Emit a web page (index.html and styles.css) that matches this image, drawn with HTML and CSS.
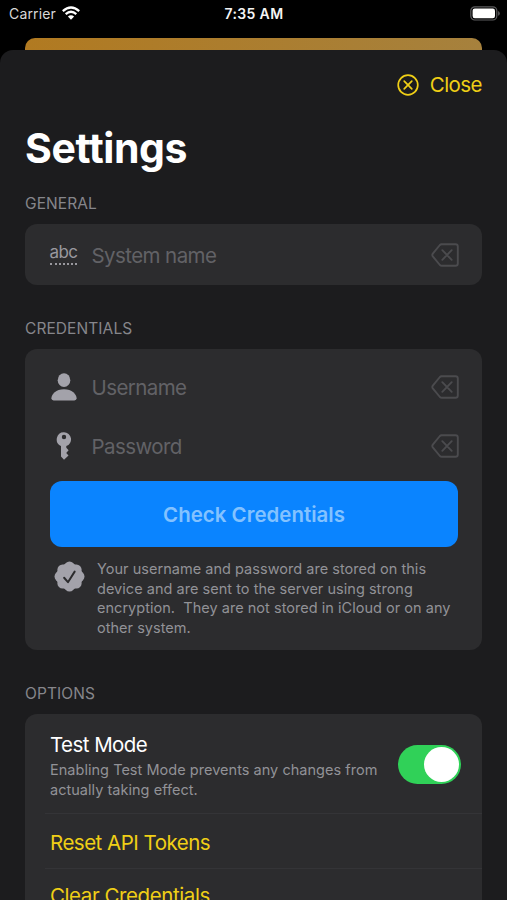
FILE: index.html
```html
<!DOCTYPE html>
<html lang="en">
<head>
<meta charset="utf-8">
<title>Settings</title>
<link rel="stylesheet" href="styles.css">
</head>
<body>
<svg class="defs" width="0" height="0" aria-hidden="true">
  <symbol id="clear" viewBox="0 0 28 24">
    <path d="M10.2 1.2H24.5Q26.8 1.2 26.8 3.5V20.5Q26.8 22.8 24.5 22.8H10.7Q9.7 22.8 8.9 22L1.8 13.4Q.8 12 1.8 10.6L8.9 2Q9.6 1.2 10.7 1.2ZM11.3 7.2L20.7 16.8M20.7 7.2L11.3 16.8" fill="none" stroke="currentColor" stroke-width="1.9" stroke-linecap="round" stroke-linejoin="round"/>
  </symbol>
</svg>
<div class="screen">
  <header class="status">
    <div class="status-left">
      <span class="carrier">Carrier</span>
      <svg class="wifi" viewBox="0 0 18 14"><g fill="none" stroke="#fff" stroke-width="2.3"><path d="M.8 5.1Q9-2.1 17.2 5.1"/><path d="M3.7 8.2Q9 3.4 14.3 8.2"/></g><path d="M5.9 10.4Q9 7.9 12.1 10.4L9 13.7Z" fill="#fff"/></svg>
    </div>
    <span class="time">7:35 AM</span>
    <div class="status-right">
      <svg class="battery" viewBox="0 0 30 15"><rect x=".8" y=".8" width="26" height="13.2" rx="4" fill="none" stroke="#5c5c5e" stroke-width="1.2"/><rect x="2.6" y="2.6" width="22.4" height="9.6" rx="2.2" fill="#fff"/><path d="M28.1 5.1Q29.8 5.7 29.8 7.4T28.1 9.7Z" fill="#5c5c5e"/></svg>
    </div>
  </header>
  <div class="backdrop"></div>
  <main class="sheet">
    <div class="toolbar">
      <button class="close">
        <svg viewBox="0 0 22 22" width="22" height="22"><path d="M7.2 7.2L14.8 14.8M14.8 7.2L7.2 14.8" stroke="currentColor" stroke-width="1.7" stroke-linecap="round"/><circle cx="11" cy="11" r="9.8" fill="none" stroke="currentColor" stroke-width="1.7"/></svg>
        <span class="close-text">Close</span>
      </button>
    </div>
    <h1>Settings</h1>

    <h2 class="h-general">General</h2>
    <section class="card general">
      <div class="field">
        <span class="icon"><span class="abc">abc</span></span>
        <span class="placeholder system">System name</span>
        <svg class="clear"><use href="#clear"/></svg>
      </div>
    </section>

    <h2 class="h-credentials">Credentials</h2>
    <section class="card credentials">
      <div class="field">
        <span class="icon"><svg width="26" height="28" viewBox="0 0 26 28"><ellipse cx="13" cy="7.2" rx="6.3" ry="6.9" fill="currentColor"/><path d="M2.6 27.4Q.4 27.4.4 25.3C.4 21.5 5 16.3 13 16.3S25.6 21.5 25.6 25.3Q25.6 27.4 23.4 27.4Z" fill="currentColor"/></svg></span>
        <span class="placeholder username">Username</span>
        <svg class="clear"><use href="#clear"/></svg>
      </div>
      <div class="field">
        <span class="icon"><svg width="16" height="28" viewBox="0 0 16 28"><path fill="currentColor" fill-rule="evenodd" d="M8 .3A7.1 7.1 0 0 0 5 13.9V24.6L8 27.8L12.5 23.4L10.2 20.9L12.6 18.3L10.3 15.8V14.1A7.1 7.1 0 0 0 8 .3ZM8 2.8A2.2 2.2 0 1 1 8 7.2A2.2 2.2 0 1 1 8 2.8Z"/></svg></span>
        <span class="placeholder password">Password</span>
        <svg class="clear"><use href="#clear"/></svg>
      </div>
      <button class="check"><span>Check Credentials</span></button>
      <div class="note">
        <svg class="seal" viewBox="0 0 30 30"><g fill="#a3a2aa"><rect x="3.3" y="3.3" width="23.4" height="23.4" rx="5"/><rect x="3.3" y="3.3" width="23.4" height="23.4" rx="5" transform="rotate(45 15 15)"/></g><path d="M9.8 16.2L13.5 20.5L20 10.3" fill="none" stroke="#2c2c2e" stroke-width="1.9" stroke-linecap="round" stroke-linejoin="round"/></svg>
        <p class="small">Your username and password are stored on this<br>device and are sent to the server using strong<br>encryption.&nbsp; They are not stored in iCloud or on any<br>other system.</p>
      </div>
    </section>

    <h2 class="h-options">Options</h2>
    <section class="card options">
      <div class="test-row">
        <div>
          <div class="row-title">Test Mode</div>
          <p class="small">Enabling Test Mode prevents any changes from<br>actually taking effect.</p>
        </div>
        <span class="toggle"><span class="knob"></span></span>
      </div>
      <div class="action">Reset API Tokens</div>
      <div class="action last">Clear Credentials</div>
    </section>
  </main>
</div>
</body>
</html>
```
FILE: styles.css
```css
* { box-sizing: border-box; }
body { margin: 0; background: #000; font-family: Inter, "Liberation Sans", sans-serif; color: #fff; }
h1, h2, p { margin: 0; }
button { border: 0; padding: 0; background: none; font: inherit; }
svg { display: block; flex: none; }
.defs { position: absolute; }
.screen { height: 900px; overflow: hidden; display: flex; flex-direction: column; }
.status { height: 38px; flex: none; display: grid; grid-template-columns: 1fr auto 1fr; padding: 0 7px 0 9px; line-height: 28px; font-size: 14px; }
.status-left { display: flex; gap: 6px; }
.carrier { color: #d8d8d8; letter-spacing: .15px; }
.wifi { width: 18px; height: 14px; margin-top: 6px; }
.time { font-weight: 600; color: #f4f4f4; letter-spacing: .35px; margin-left: -1px; }
.status-right { display: flex; justify-content: flex-end; }
.battery { width: 30px; height: 15px; margin-top: 6px; }
.backdrop { height: 24px; flex: none; margin: 0 25px; border-radius: 10px 10px 0 0; background: linear-gradient(90deg, #b17a21, #a6813d); }
.sheet { flex: 1; min-height: 0; margin-top: -12px; padding: 0 25px; border-radius: 13px 13px 0 0; background: #1c1c1e; }
.toolbar { height: 69px; display: flex; justify-content: flex-end; align-items: center; }
.close { display: flex; align-items: center; gap: 11px; color: #f0cf16; font-size: 20.5px; line-height: 26px; }
.close-text { letter-spacing: -.55px; }
h1 { height: 57px; font-size: 41px; line-height: 59px; font-weight: 700; letter-spacing: -.4px; }
h2 { height: 20px; font-size: 15.5px; line-height: 22px; font-weight: 400; color: #86868b; text-transform: uppercase; letter-spacing: .08px; }
.h-general { margin-top: 17px; }
.h-credentials { margin-top: 33px; }
.h-options { margin-top: 33px; }
.card { border-radius: 12px; background: #2c2c2e; padding-left: 25px; }
.general { height: 61px; margin-top: 11px; padding-top: 1px; padding-right: 23px; }
.credentials { height: 301px; margin-top: 11px; padding-top: 8px; padding-right: 24px; }
.options { height: 260px; margin-top: 11px; }
.field { height: 59px; display: flex; align-items: center; color: #626266; font-size: 20.5px; }
.credentials .field { margin-right: -1px; }
.icon { width: 27px; margin-right: 15px; display: flex; justify-content: center; color: #a3a2aa; }
.abc { font-size: 17px; line-height: 16px; height: 21px; letter-spacing: -.6px; color: #99989e; border-bottom: 2px dotted #99989e; }
.placeholder { flex: 1; letter-spacing: -.58px; margin-left: -.5px; padding-top: 2px; }
.clear { width: 28px; height: 24px; color: #4b4b4e; }
.check { display: flex; width: 100%; height: 66px; margin-top: 6px; border-radius: 12px; background: #0a84ff; color: #83c2ff; font-size: 20.5px; font-weight: 600; align-items: center; justify-content: center; }
.note { display: flex; margin-top: 12px; padding-left: 4px; }
.seal { width: 31px; height: 31px; margin: 2px 12px 0 0; }
.small { font-size: 14.5px; line-height: 19.6px; letter-spacing: .03px; color: #929297; white-space: nowrap; }
.test-row { height: 99px; display: flex; justify-content: space-between; padding: 17px 21px 0 0; }
.row-title { font-size: 20.5px; line-height: 27px; margin-bottom: 2px; letter-spacing: -.55px; }
.toggle { width: 63px; height: 39px; margin-top: 14px; padding: 2px; border-radius: 20px; background: #30d158; display: flex; justify-content: flex-end; }
.knob { width: 35px; height: 35px; border-radius: 50%; background: #fff; }
.action { height: 55px; border-top: 1px solid #343437; line-height: 58px; font-size: 20.5px; letter-spacing: -.5px; color: #f0cf16; margin-left: -5px; padding-left: 5px; }
.last { line-height: 54px; letter-spacing: -.42px; }
```
